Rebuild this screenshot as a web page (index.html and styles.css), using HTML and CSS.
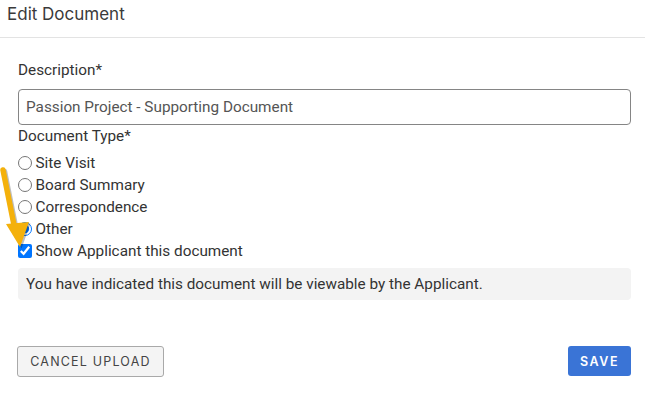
FILE: index.html
```html
<!DOCTYPE html>
<html lang="en">
<head>
    <meta charset="UTF-8">
    <meta name="viewport" content="width=device-width, initial-scale=1.0">
    <title>Edit Document</title>
    <link rel="stylesheet" href="styles.css">
</head>
<body>
    <div class="modal">
        <div class="modal-header">Edit Document</div>

        <div class="modal-body">
            <label class="field-label" for="description">Description*</label>
            <input id="description" class="text-input" value="Passion Project - Supporting Document">

            <div class="field-label type-label">Document Type*</div>
            <div class="options">
                <label class="option"><input type="radio" name="docType"> Site Visit</label>
                <label class="option"><input type="radio" name="docType"> Board Summary</label>
                <label class="option"><input type="radio" name="docType"> Correspondence</label>
                <label class="option"><input type="radio" name="docType" checked> Other</label>
                <label class="option"><input type="checkbox" checked> Show Applicant this document</label>
            </div>

            <div class="notice">You have indicated this document will be viewable by the Applicant.</div>
        </div>

        <div class="modal-footer">
            <button class="btn btn-cancel">Cancel Upload</button>
            <button class="btn btn-save">Save</button>
        </div>

        <!-- annotation arrow -->
        <svg class="arrow" width="40" height="260" viewBox="0 0 40 260">
            <g opacity="0.25" transform="translate(1.5,1.5)">
                <path d="M3 170 L15 230" stroke="#000" stroke-width="5.5" stroke-linecap="round" fill="none"/>
                <path d="M6 224 L29 222 L20 247 Z" fill="#000"/>
            </g>
            <path d="M3 170 L15 230" stroke="#f4b10b" stroke-width="5.5" stroke-linecap="round" fill="none"/>
            <path d="M6 224 L29 222 L20 247 Z" fill="#f4b10b"/>
        </svg>
    </div>
</body>
</html>
```

FILE: styles.css
```css
* {
    margin: 0;
    padding: 0;
    box-sizing: border-box;
}

body {
    background: #ffffff;
    font-family: "Roboto", "Liberation Sans", sans-serif;
    color: #333;
}

.modal {
    position: relative;
    width: 645px;
    height: 393px;
}

.modal-header {
    font-family: "Inter", "Open Sans", sans-serif;
    font-size: 17px;
    color: #3a3a3a;
    padding: 4px 7px 0;
    height: 38px;
    border-bottom: 1px solid #e3e3e3;
}

.modal-body {
    padding: 24px 14px 0 18px;
    display: flex;
    flex-direction: column;
}

.field-label {
    font-size: 15.3px;
    color: #333;
    line-height: 17px;
}

.text-input {
    margin-top: 10px;
    width: 613px;
    height: 36px;
    border: 1px solid #858585;
    border-radius: 4px;
    padding: 0 7px;
    font-family: "Roboto", "Liberation Sans", sans-serif;
    font-size: 15.3px;
    color: #555;
    outline: none;
}

.type-label {
    margin-top: 3px;
}

.options {
    margin-top: 7px;
    display: flex;
    flex-direction: column;
}

.option {
    display: flex;
    align-items: center;
    height: 22px;
    font-size: 15.3px;
    color: #333;
}

.option input {
    width: 13.5px;
    height: 13.5px;
    margin: 0 4px 0 0;
}

.notice {
    margin-top: 6px;
    width: 613px;
    height: 32px;
    background: #f3f3f3;
    border-radius: 4px;
    padding: 0 8px;
    display: flex;
    align-items: center;
    font-size: 15.3px;
    color: #333;
}

.modal-footer {
    display: flex;
    justify-content: space-between;
    padding: 46px 14px 0 17px;
}

.btn {
    font-family: "Inter", "Open Sans", sans-serif;
    text-transform: uppercase;
    letter-spacing: 1.2px;
    font-size: 12.5px;
    border-radius: 3px;
    height: 31px;
    cursor: pointer;
}

.btn-cancel {
    width: 147px;
    background: #f4f4f4;
    border: 1px solid #a9a9a9;
    color: #444;
}

.btn-save {
    width: 63px;
    height: 30px;
    background: #3a74d6;
    border: none;
    color: #fff;
    font-weight: 600;
    letter-spacing: 1.6px;
}

.arrow {
    position: absolute;
    left: 0;
    top: 0;
}
```
